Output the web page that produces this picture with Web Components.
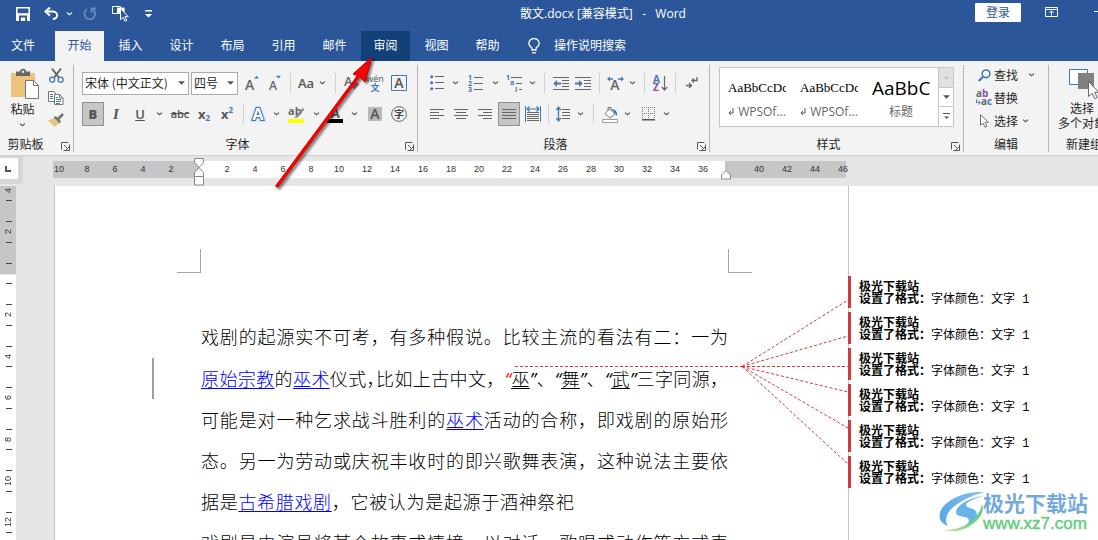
<!DOCTYPE html>
<html lang="zh-CN">
<head>
<meta charset="utf-8">
<title>散文.docx - Word</title>
<style>
  html, body { margin: 0; height: 100%; }
  body { font: 12px/16px "Noto Sans CJK SC", "Liberation Sans", sans-serif; color: #262626; overflow: hidden; background: #fff; }
</style>
</head>
<body>
<word-app></word-app>

<script>
const define = (name, html, setup) => {
  const tpl = document.createElement('template');
  tpl.innerHTML = html;
  customElements.define(name, class extends HTMLElement {
    connectedCallback() {
      if (this.shadowRoot) return;
      this.attachShadow({ mode: 'open' }).append(tpl.content.cloneNode(true));
      if (setup) setup(this, this.shadowRoot);
    }
  });
};

const G = '#666', B = '#3f78b5';
const lines = (list, c = G) => list.map(([x, y, w]) => `<rect x="${x}" y="${y}" width="${w}" height="1" fill="${c}"/>`).join('');
const T = 'font-family="Open Sans, sans-serif"';
const icons = {
  save: [14, 14, `<path fill="#fff" fill-rule="evenodd" d="M0 0h14v14H0zM1.6 1.4v4.8h10.8V1.4zM3 8.6V14h1.8v-3.6h4.4V14H11V8.6z"/><path fill="#fff" d="M5.4 11.2h1.8V14H5.4z"/>`],
  undo: [15, 13, `<path d="M1.6 4.6h7.2a4.2 3.6 0 0 1 0 7.4" fill="none" stroke="#fff" stroke-width="2"/><path d="M6 .4 1.5 4.6 6 8.8" fill="none" stroke="#fff" stroke-width="2"/>`],
  redo: [14, 14, `<path d="M9.6 2.2A5.4 5.4 0 1 1 4 2.2" fill="none" stroke="#6b8bbd" stroke-width="1.8"/><path d="M8.6 6V1.4h4.6" fill="none" stroke="#6b8bbd" stroke-width="1.8"/>`],
  pick: [17, 17, `<path d="M.5 1.5h8v7h-8z" fill="none" stroke="#fff"/><path d="M5 2.6h7.6V9H5z" fill="#fff"/><path d="M8.5 3.5v11.2l2.7-2.4 1.8 4 1.8-.9-1.9-3.7h3.4z" fill="#2b579a" stroke="#fff"/>`],
  custom: [7, 8, `<path d="M0 0h7v1.4H0zM0 4h7L3.5 7.5z" fill="#fff"/>`],
  bulb: [12, 16, `<path d="M4 12v-2C2.500 8.600.800 7.600.800 5.400a5.200 4.900 0 0 1 10.400 0C11.200 7.600 9.500 8.600 8 10v2zM4 14.800h4" fill="none" stroke="#fff" stroke-width="1.300"/>`],
  ribbonopt: [13, 10, `<path d="M.5.5h12v9H.5zM.5 2.500h12M6.500 8.500V4.200M4.300 6l2.200-2.200L8.700 6" fill="none" stroke="#fff"/>`],
  min: [10, 2, `<path d="M0 0h10v1H0z" fill="#fff"/>`],
  chev: [7, 4, `<path d="M1 .6 3.500 2.800 6 .6" fill="none" stroke="#555" stroke-width="1.200"/>`],
  chevw: [7, 4, `<path d="M1 .6 3.500 2.800 6 .6" fill="none" stroke="#fff" stroke-width="1.200"/>`],
  launch: [9, 9, `<path d="M.5 7.500V.5h7M3 3l4 4" fill="none" stroke="#555"/><path d="M8.500 2.500v6H2.500M4.500 8.500 8.500 4.500" fill="none" stroke="#555"/>`],
  paste: [28, 30, `<path d="M0 4h24v24H0z" fill="#edc47a"/><path d="M5 7V2.600h4a3 2.800 0 0 1 6 0h4V7z" fill="#666"/><circle cx="12" cy="2.800" r="1.200" fill="#f3f3f3"/><path d="M14.500 11.500h8l5 5v13h-13z" fill="#fff" stroke="#777"/><path d="M22.500 11.500v5h5" fill="none" stroke="#777"/>`],
  cut: [15, 15, `<path d="M3 .5l6.800 9M12 .5 5.200 9.500" stroke="#666" stroke-width="2" fill="none"/><circle cx="3.200" cy="11.700" r="2.500" fill="none" stroke="${B}" stroke-width="1.300"/><circle cx="11.600" cy="11.700" r="2.500" fill="none" stroke="${B}" stroke-width="1.300"/>`],
  copy: [16, 14, `<path d="M6 10.500H.5V.5H6L8 3" fill="#fff" stroke="#777"/>${lines([[2,3,3],[2,5,3],[2,7,3]],B)}<path d="M6.500 3.500h5l3.500 3.500v6.500H6.500z" fill="#fff" stroke="#777"/><path d="M11.500 3.500V7H15" fill="none" stroke="#777"/>${lines([[8,6,2],[8,8,5],[8,10,5],[8,12,4]],B)}`],
  brush: [16, 15, `<path d="M0 7.500 5.500 5l5.500 5.500L6.500 14z" fill="#edc47a"/><path d="M5.500 4.600 7.600 3l2 1.600L14 0l2 2-4.400 4.600 1.400 2-1.600 1.900z" fill="#777"/>`],
  grow: [14, 16, `<text x="0" y="15" ${T} font-size="14" font-weight="600" fill="${G}">A</text><path d="M9 3.500 11.500.8 14 3.500z" fill="${B}"/>`],
  shrink: [14, 16, `<text x="1" y="15" ${T} font-size="12" font-weight="600" fill="${G}">A</text><path d="M8 .8h5L10.500 3.500z" fill="${B}"/>`],
  clear: [16, 16, `<text x="0" y="11" ${T} font-size="13" fill="${G}">A</text><path d="M6 11.500 11.500 6l4 3.500-5 5z" fill="#c77b95"/>`],
  boxa: [16, 16, `<path d="M.5.5h15v15H.5z" fill="none" stroke="${B}"/><text x="8" y="13" text-anchor="middle" ${T} font-size="14" font-weight="600" fill="#555">A</text>`],
  glow: [16, 16, `<text x="8" y="14" text-anchor="middle" ${T} font-size="16" font-weight="700" fill="#fff" stroke="${B}" stroke-width="2" paint-order="stroke" style="filter:drop-shadow(0 0 1px #8fb6e0)">A</text>`],
  mark: [17, 17, `<text x="0" y="9" ${T} font-size="11" font-weight="700" fill="${G}">ab</text><path d="M15 1.500 8 9.500 6 12l3.500-.5L16 4z" fill="#888"/><path d="M0 13h16v4H0z" fill="#ff0"/>`],
  fcolor: [17, 17, `<text x="8" y="12" text-anchor="middle" ${T} font-size="14" font-weight="700" fill="${G}">A</text><path d="M0 13h16v4H0z" fill="#000"/>`],
  shade: [14, 14, `<path d="M0 0h14v14H0z" fill="#b9b9b9"/><text x="7" y="12" text-anchor="middle" ${T} font-size="14" font-weight="600" fill="#555">A</text>`],
  circ: [16, 16, `<circle cx="8" cy="8" r="7.400" fill="none" stroke="#666"/><text x="8" y="12" text-anchor="middle" font-family="Noto Sans CJK SC" font-size="10" fill="#444">字</text>`],
  bullets: [14, 16, `<circle cx="1.700" cy="1.700" r="1.500" fill="${B}"/><circle cx="1.700" cy="7.700" r="1.500" fill="${B}"/><circle cx="1.700" cy="13.700" r="1.500" fill="${B}"/>${lines([[5,1,9],[5,7,9],[5,13,9]])}`],
  numbers: [15, 17, `<g ${T} font-size="7" font-weight="700" fill="${B}"><text y="5">1</text><text y="11">2</text><text y="17">3</text></g>${lines([[6,2,9],[6,8,9],[6,14,9]])}`],
  multi: [17, 17, `<g ${T} font-size="7" font-weight="700" fill="${B}"><text y="5">1</text><text x="4" y="10">a</text><text x="9" y="17">i</text></g>${lines([[5,2,11],[10,8,6],[13,14,3]])}`],
  outdent: [16, 13, lines([[0,0,16],[9,3,7],[9,6,7],[9,9,7],[0,12,16]]) + `<path d="M.3 6.500 4 3v2.500h4v2H4V10z" fill="${B}"/>`],
  indent: [16, 13, lines([[0,0,16],[9,3,7],[9,6,7],[9,9,7],[0,12,16]]) + `<path d="M7.700 6.500 4 3v2.500H0v2h4V10z" fill="${B}"/>`],
  asian: [17, 15, `<text x="8" y="14" text-anchor="middle" ${T} font-size="14" font-weight="600" fill="${G}">A</text><path d="M0 3 3 .5v1.700h3v1.600H3v1.700zM17 3 14 .5v1.700h-3v1.600h3v1.700z" fill="${B}"/>`],
  sort: [15, 17, `<text y="8" ${T} font-size="10" font-weight="700" fill="${B}">A</text><text y="16" ${T} font-size="10" font-weight="700" fill="#8a4fa8">Z</text><path d="M11.500 1v14M8.800 12l2.700 3 2.700-3" fill="none" stroke="${G}" stroke-width="1.200"/>`],
  pmark: [12, 12, `<path d="M11 0v3.500H6M8 1.500 6 3.500l2 2M0 8.500h5M3 6l2.500 2.500L3 11" fill="none" stroke="${G}" stroke-width="1.300"/>`],
  al: [14, 11, lines([[0,0,14],[0,3,9],[0,6,14],[0,9,9]])],
  ac: [14, 11, lines([[0,0,14],[2,3,10],[0,6,14],[2,9,10]])],
  ar: [14, 11, lines([[0,0,14],[5,3,9],[0,6,14],[5,9,9]])],
  aj: [14, 11, lines([[0,0,14],[0,3,14],[0,6,14],[0,9,14]])],
  dist: [16, 16, `<path d="M.5 0v16M15.500 0v16" stroke="${B}"/><path d="M4.500.5 2 3l2.500 2.500M11.500.5 14 3l-2.500 2.500M2 3h12" stroke="${B}" fill="none" stroke-width="1.200"/>${lines([[2,6,12],[2,8,12],[2,10,12],[2,12,12],[2,14,12]])}`],
  spacing: [14, 16, `<path d="M2.500 1v14M.3 4l2.200-3 2.200 3M.3 12l2.200 3 2.200-3" stroke="${B}" fill="none" stroke-width="1.300"/>${lines([[6,3,8],[6,6,8],[6,9,8],[6,12,8]])}`],
  bucket: [17, 17, `<path d="M7.500 2.500 13 8l-5 4-5-4.500zM6 5V1.500h3V5" fill="#fff" stroke="#777"/><path d="M10 3c4 .5 5.500 3 5 6.500-2-.5-1-2.500-3-3z" fill="${B}"/><path d="M.5 13.500h15v3H.5z" fill="#fff" stroke="#999"/>`],
  borders: [13, 14, `<path d="M.5 0v12M6.500 0v12M12.500 0v12M0 .5h13M0 6.500h13" stroke="#777" stroke-dasharray="1 1" fill="none"/><path d="M0 12h13v1.500H0z" fill="#555"/>`],
  find: [13, 13, `<circle cx="8" cy="4.800" r="3.800" fill="#fff" stroke="${B}" stroke-width="1.600"/><path d="M5 7.800.8 12" stroke="${B}" stroke-width="2.200"/>`],
  replace: [17, 16, `<g ${T} font-size="10" font-weight="700"><text y="7" fill="${G}">a<tspan fill="#8a4fa8">b</tspan></text><text x="5" y="15" fill="${G}">a<tspan fill="${B}">c</tspan></text></g><path d="M.5 9.500v3h3M2.500 10.500l2 2-2 2" fill="none" stroke="${B}"/>`],
  cursor: [9, 14, `<path d="M.5.8v10.700l2.600-2.400 1.900 4.200 1.900-.9L5 8.400h3.500z" fill="#fff" stroke="#777"/>`],
  objects: [30, 30, `<path d="M.5.5h18v15H.5z" fill="#fff" stroke="${B}"/><path d="M9 4h16v16H9z" fill="#808080"/><path d="M19.500 12.500v15l3.700-3.200 2.600 5.400 2.400-1.200-2.600-5.200h4.200z" fill="#fff" stroke="#666"/>`],
  up: [7, 4, `<path d="M1 3.500h5L3.500 1z" fill="#bbb"/>`],
  down: [7, 4, `<path d="M0 .3h7L3.500 3.800z" fill="#555"/>`],
  more: [7, 7, `<path d="M0 0h7v1H0zM1 3.500h5L3.500 6z" fill="#555"/>`],
  ret: [6, 8, `<path d="M5 0v5H1M3 3 1 5l2 2" fill="none" stroke="#555"/>`],
  tabstop: [6, 6, `<path d="M1 0v5h5" fill="none" stroke="#555" stroke-width="2"/>`],
  hang: [12, 28, `<path d="M1.500.5h9v4L6 9.500 1.500 4.500zM6 9.500l4.500 5v4h-9v-4zM1.500 18.500h9V27h-9z" fill="#fff" stroke="#888"/>`],
  right: [12, 10, `<path d="M6 .5 10.500 5v4h-9V5z" fill="#fff" stroke="#888"/>`]
};

define('rb-icon', `<style>:host{display:inline-flex;flex:none}svg{display:block;overflow:visible}</style>`, (el, root) => {
  const [w, h, body] = icons[el.getAttribute('name')];
  root.innerHTML += `<svg width="${w}" height="${h}" viewBox="0 0 ${w} ${h}" aria-hidden="true">${body}</svg>`;
});

/* Ribbon tool: w = width of its cell in the row */
define('rb-tool', `<style>
  :host{display:flex;flex:none;height:24px}
  button{all:unset;box-sizing:border-box;flex:1;min-width:0;display:flex;align-items:center;justify-content:center;color:#555;font:600 13px/16px "Open Sans","Noto Sans CJK SC",sans-serif}
  :host([on]) button{background:#c6c6c6;border:1px solid #929292}
</style><button type="button"><slot></slot></button>`, (el, root) => {
  const b = root.querySelector('button');
  el.style.width = el.getAttribute('w') + 'px';
  b.setAttribute('aria-label', el.getAttribute('label') || '更多');
  if (el.hasAttribute('icon')) b.insertAdjacentHTML('afterbegin', `<rb-icon name="${el.getAttribute('icon')}"></rb-icon>`);
});

define('rb-sep', `<style>:host{flex:none;display:flex;justify-content:center;height:20px}i{width:1px;background:#d0d0d0}</style><i></i>`,
  el => { el.style.width = el.getAttribute('w') + 'px'; });

define('rb-group', `<style>
  :host{display:flex;flex-direction:column;box-sizing:border-box;border-right:1px solid #b5b5b5;height:87px;flex:none}
  .body{flex:1;min-height:0}
  footer{display:flex;height:16px;align-items:center}
  span{flex:1;text-align:center;white-space:nowrap}
  button{all:unset;width:12px;display:flex;padding-top:4px}
  :host([launcher]) span{padding-right:4px}
  :host(.clip) span{padding-right:10px}
</style><div class="body"><slot></slot></div><footer><span></span></footer>`, (el, root) => {
  root.querySelector('span').textContent = el.getAttribute('label');
  if (el.hasAttribute('launcher')) root.querySelector('footer').insertAdjacentHTML('beforeend', '<button type="button" aria-label="更多设置"><rb-icon name="launch"></rb-icon></button>');
});

define('rb-select', `<style>
  :host{display:grid;align-items:center;flex:none;height:23px}
  select,rb-icon{grid-area:1/1}
  select{appearance:none;box-sizing:border-box;width:100%;height:23px;margin:0;padding:0 0 0 2px;border:1px solid #ababab;border-radius:0;background:#fff;color:#262626;font:inherit}
  rb-icon{justify-self:end;margin-right:4px;pointer-events:none}
</style><select></select><rb-icon name="down"></rb-icon>`, (el, root) => {
  const s = root.querySelector('select');
  s.add(new Option(el.getAttribute('value')));
  s.setAttribute('aria-label', el.getAttribute('label'));
  el.style.width = el.getAttribute('w') + 'px';
});

define('title-bar', `<style>
  :host{display:flex;height:31px;background:#2b579a;color:#fff}
  button{all:unset;display:flex;align-items:center;justify-content:center}
  .qat{display:flex;flex:0 0 223px;padding:0 0 4px 8px}
  .qat button{width:30px}
  .qat .u{width:27px}
  .qat .s{width:8px}
  .qat .r{width:34px}
  .qat .p{width:26px}
  h1{flex:1;margin:0;padding-bottom:4px;align-self:center;text-align:center;font:12px/16px "Open Sans","Noto Sans CJK SC",sans-serif;white-space:pre}
  .win{display:flex;align-items:flex-start}
  .win .login{box-sizing:border-box;width:46px;height:19px;padding-bottom:2px;margin-top:3px;background:#fff;color:#2b579a;border-radius:1px}
  .win .opt{width:61px;height:24px}
  .win .min{width:4px;height:24px;justify-content:flex-start;margin-left:12px;overflow:hidden}
</style>
<div class="qat">
  <button type="button" aria-label="保存"><rb-icon name="save"></rb-icon></button>
  <button type="button" class="u" aria-label="撤消"><rb-icon name="undo"></rb-icon></button>
  <button type="button" class="s" aria-label="撤消列表"><rb-icon name="chevw"></rb-icon></button>
  <button type="button" class="r" aria-label="重复"><rb-icon name="redo"></rb-icon></button>
  <button type="button" class="p" aria-label="选择对象"><rb-icon name="pick"></rb-icon></button>
  <button type="button" aria-label="自定义快速访问工具栏"><rb-icon name="custom"></rb-icon></button>
</div>
<h1>散文.docx [兼容模式]   -   Word</h1>
<div class="win">
  <button type="button" class="login">登录</button>
  <button type="button" class="opt" aria-label="功能区显示选项"><rb-icon name="ribbonopt"></rb-icon></button>
  <button type="button" class="min" aria-label="最小化"><rb-icon name="min"></rb-icon></button>
</div>`);

define('tab-strip', `<style>
  :host{display:flex;gap:2px;height:30px;background:#2b579a;color:#fff;font-size:12px}
  button{all:unset;box-sizing:border-box;width:49px;height:30px;padding-bottom:3px;display:flex;align-items:center;justify-content:center;flex:none}
  .file{width:53px;padding-right:7px}
  .on{background:#f3f3f3;color:#2b579a}
  .hot{background:#124078}
  .tell{width:auto;gap:14px;margin-left:14px}
  .tell rb-icon{margin-top:3px}
</style>
<button type="button" class="file">文件</button><button type="button" class="on">开始</button><button type="button">插入</button><button type="button">设计</button><button type="button">布局</button><button type="button">引用</button><button type="button">邮件</button><button type="button" class="hot">审阅</button><button type="button">视图</button><button type="button">帮助</button>
<button type="button" class="tell"><rb-icon name="bulb"></rb-icon>操作说明搜索</button>`);

define('ribbon-bar', `<style>
  :host{display:flex;box-sizing:border-box;height:95px;padding-top:4px;background:#f3f3f3;border-bottom:1px solid #d2d2d2;overflow:hidden}
  .row{display:flex;align-items:center;height:24px}
  .font .row,.para .row{margin-top:6px}
  .row + .row{margin-top:7px}
  .clip{width:74px}.font{width:344px}.para{width:292px}.style{flex:1 0 254px}.edit{width:85px}.new{width:70px;border-right:0}
  .clipbody{display:grid;grid-template-columns:45px 20px;column-gap:1px}
  button{all:unset;font:inherit}
  .big{display:flex;flex-direction:column;align-items:center;padding-top:4px}
  .clipbody .big rb-icon:first-child{margin:0 0 2px 4px}
  .clipbody .big rb-icon:last-child{margin-top:6px}
  .small{display:flex;flex-direction:column;align-items:center;gap:8px;padding-top:3px}
  .small button{display:flex}
  .font .row{padding-left:8px}.para .row{padding-left:6px}
  .strike{text-decoration:line-through;font-weight:600;font-size:11px}
  .ital{font:italic 700 15px/16px "Liberation Serif",serif}
  sub,sup{font-size:8px;line-height:8px;color:#3f78b5;align-self:flex-end}
  sup{align-self:flex-start}
  .sub{display:flex;font-weight:700}
  .wen{display:flex;flex-direction:column;align-items:center;font:400 9px/9px "Open Sans",sans-serif}
  .wen b{font:700 9px/9px "Noto Sans CJK SC",sans-serif;color:#3f78b5}
  .gallery{display:flex;box-sizing:border-box;height:60px;margin:2px 9px 0;border:1px solid #c6c6c6;background:#fff}
  .cells{flex:1;display:flex;gap:14px;padding-left:8px;overflow:hidden}
  .cells button{width:58px;overflow:hidden;white-space:nowrap;display:flex;flex-direction:column}
  .s{font:13px/40px "Liberation Serif",serif;color:#000;height:36px}
  .s.h{font:19px/40px "Open Sans",sans-serif}
  .l{color:#666;display:flex;align-items:center;justify-content:center;gap:4px;font:12px/16px "Open Sans","Noto Sans CJK SC",sans-serif}
  .nav{display:flex;flex-direction:column;width:14px;border-left:1px solid #c6c6c6}
  .nav button{flex:1;display:flex;align-items:center;justify-content:center}
  .nav button:first-child{background:#e1e1e1}
  .nav button + button{border-top:1px solid #c6c6c6}
  .edit button{display:flex;align-items:center;height:20px;padding-bottom:3px;width:74px;padding-left:10px}
  .edit button rb-icon:first-child{width:20px;justify-content:center}
  .edit .ch{margin-left:10px}
  .edit .near{margin-left:4px}
  .new .big{width:66px;line-height:15px;padding-top:4px}
  .new .big rb-icon{margin:0 0 1px 4px}
</style>
<rb-group class="clip" label="剪贴板" launcher><div class="clipbody">
  <button type="button" class="big"><rb-icon name="paste"></rb-icon>粘贴<rb-icon name="chev"></rb-icon></button>
  <div class="small"><button type="button" aria-label="剪切"><rb-icon name="cut"></rb-icon></button><button type="button" aria-label="复制"><rb-icon name="copy"></rb-icon></button><button type="button" aria-label="格式刷"><rb-icon name="brush"></rb-icon></button></div>
</div></rb-group>
<rb-group class="font" label="字体" launcher>
  <div class="row">
    <rb-select w="107" label="字体" value="宋体 (中文正文)"></rb-select><rb-select w="47" label="字号" value="四号" style="margin-left:2px"></rb-select>
    <rb-tool w="28" icon="grow" label="增大字号"></rb-tool><rb-tool w="18" icon="shrink" label="减小字号"></rb-tool><rb-sep w="12"></rb-sep>
    <rb-tool w="20" label="更改大小写">Aa</rb-tool><rb-tool w="12" icon="chev"></rb-tool><rb-sep w="14"></rb-sep>
    <rb-tool w="20" icon="clear" label="清除格式"></rb-tool><rb-tool w="26" label="拼音指南"><span class="wen">wén<b>文</b></span></rb-tool><rb-tool w="22" icon="boxa" label="字符边框"></rb-tool>
  </div>
  <div class="row">
    <rb-tool w="22" on label="加粗"><b>B</b></rb-tool><rb-tool w="24" label="倾斜"><span class="ital">I</span></rb-tool><rb-tool w="24" label="下划线"><u>U</u></rb-tool><rb-tool w="14" icon="chev"></rb-tool>
    <rb-tool w="28" label="删除线"><span class="strike">abc</span></rb-tool><rb-tool w="20" label="下标"><span class="sub">x<sub>2</sub></span></rb-tool><rb-tool w="26" label="上标"><span class="sub">x<sup>2</sup></span></rb-tool><rb-sep w="6"></rb-sep>
    <rb-tool w="24" icon="glow" label="文本效果"></rb-tool><rb-tool w="12" icon="chev"></rb-tool><rb-tool w="28" icon="mark" label="突出显示"></rb-tool><rb-tool w="12" icon="chev"></rb-tool>
    <rb-tool w="26" icon="fcolor" label="字体颜色"></rb-tool><rb-tool w="12" icon="chev"></rb-tool><rb-tool w="30" icon="shade" label="字符底纹"></rb-tool><rb-tool w="18" icon="circ" label="带圈字符"></rb-tool>
  </div>
</rb-group>
<rb-group class="para" label="段落" launcher>
  <div class="row">
    <rb-tool w="26" icon="bullets" label="项目符号"></rb-tool><rb-tool w="10" icon="chev"></rb-tool><rb-tool w="30" icon="numbers" label="编号"></rb-tool><rb-tool w="10" icon="chev"></rb-tool><rb-tool w="28" icon="multi" label="多级列表"></rb-tool><rb-tool w="8" icon="chev"></rb-tool><rb-sep w="16"></rb-sep>
    <rb-tool w="18" icon="outdent" label="减少缩进量"></rb-tool><rb-tool w="26" icon="indent" label="增加缩进量"></rb-tool><rb-sep w="6"></rb-sep><rb-tool w="26" icon="asian" label="中文版式"></rb-tool><rb-tool w="8" icon="chev"></rb-tool><rb-sep w="16"></rb-sep>
    <rb-tool w="16" icon="sort" label="排序"></rb-tool><rb-sep w="14"></rb-sep><rb-tool w="20" icon="pmark" label="显示编辑标记"></rb-tool>
  </div>
  <div class="row">
    <rb-tool w="26" icon="al" label="左对齐"></rb-tool><rb-tool w="22" icon="ac" label="居中"></rb-tool><rb-tool w="26" icon="ar" label="右对齐"></rb-tool><rb-tool w="22" on icon="aj" label="两端对齐"></rb-tool><rb-tool w="26" icon="dist" label="分散对齐"></rb-tool><rb-sep w="4"></rb-sep>
    <rb-tool w="26" icon="spacing" label="行和段落间距"></rb-tool><rb-tool w="8" icon="chev"></rb-tool><rb-sep w="18"></rb-sep><rb-tool w="16" icon="bucket" label="底纹"></rb-tool><rb-tool w="18" icon="chev"></rb-tool><rb-tool w="24" icon="borders" label="边框"></rb-tool><rb-tool w="12" icon="chev"></rb-tool>
  </div>
</rb-group>
<rb-group class="style" label="样式" launcher><div class="gallery">
  <div class="cells">
    <button type="button"><span class="s">AaBbCcDd</span><span class="l"><rb-icon name="ret"></rb-icon>WPSOf...</span></button>
    <button type="button"><span class="s">AaBbCcDd</span><span class="l"><rb-icon name="ret"></rb-icon>WPSOf...</span></button>
    <button type="button"><span class="s h">AaBbC</span><span class="l">标题</span></button>
  </div>
  <div class="nav"><button type="button" aria-label="上一行"><rb-icon name="up"></rb-icon></button><button type="button" aria-label="下一行"><rb-icon name="down"></rb-icon></button><button type="button" aria-label="其他"><rb-icon name="more"></rb-icon></button></div>
</div></rb-group>
<rb-group class="edit" label="编辑">
  <button type="button"><rb-icon name="find"></rb-icon>查找<rb-icon name="chev" class="ch"></rb-icon></button>
  <button type="button"><rb-icon name="replace"></rb-icon>替换</button>
  <button type="button"><rb-icon name="cursor"></rb-icon>选择<rb-icon name="chev" class="near"></rb-icon></button>
</rb-group>
<rb-group class="new" label="新建组"><button type="button" class="big"><rb-icon name="objects"></rb-icon><span>选择</span><span>多个对象</span></button></rb-group>`);

define('h-ruler', `<style>
  :host{display:flex;height:30px;background:#e6e6e6}
  .corner{all:unset;box-sizing:border-box;width:23px;height:28px;border:solid #d6d6d6;border-width:2px 5px 5px 0;background:#fdfdfd;display:flex;align-items:center;justify-content:center;padding-right:2px}
  .scale{position:relative;margin:5px 0 0 22px}
  ol{display:flex;margin:0;padding:0;list-style:none;font:9px/17px "Liberation Sans",sans-serif;color:#333;
    background:linear-gradient(to right,transparent 8px,#c6c6c6 8px 154px,#fff 154px 680px,#c6c6c6 680px 801px,transparent 801px)}
  li{width:28px;height:17px;text-align:center}
  rb-icon{position:absolute}
  .l{left:148px;top:-3px}
  .r{left:675px;top:9px}
</style><button type="button" class="corner" aria-label="制表符"><rb-icon name="tabstop" style="position:static"></rb-icon></button>
<div class="scale"><ol></ol><rb-icon class="l" name="hang"></rb-icon><rb-icon class="r" name="right"></rb-icon></div>`, (el, root) => {
  const ol = root.querySelector('ol');
  for (let n = -10; n <= 46; n += 2) {
    const li = document.createElement('li');
    li.textContent = n === 0 || n === 38 ? '' : Math.abs(n);
    ol.append(li);
  }
});

define('v-ruler', `<style>
  :host{display:block;width:16px;flex:none;overflow:hidden;background:linear-gradient(#c6c6c6 88px,#e6e6e6 88px 89px,#fff 89px)}
  ol{margin:-16px 0 0;padding:0;list-style:none;font:9px/16px "Liberation Sans",sans-serif;color:#333}
  li{box-sizing:border-box;height:41px;padding:10px 0;display:flex;flex-direction:column;align-items:center;justify-content:space-between}
  li:nth-child(even){height:42px}
  li::before,li::after{content:"";width:6px;height:1px;margin-left:2px;background:#444}
  span{writing-mode:vertical-rl;transform:rotate(180deg);width:16px}
</style><ol></ol>`, (el, root) => {
  root.querySelector('ol').innerHTML = ['4','2','','2','4','6','8','10','12'].map(n => `<li><span>${n}</span></li>`).join('');
});

define('doc-page', `<style>
  :host{display:grid;box-sizing:border-box;flex:none;width:795px;grid-template-columns:146px 527px 1fr;grid-template-rows:63px 24px 45px auto;border:solid #c6c6c6;border-width:0 1px;background:#fff}
  .mark{grid-row:2;width:23px;border:solid #a6a6a6;border-width:0 1px 1px 0}
  .tl{grid-column:1;justify-self:end}
  .tr{grid-column:3;border-width:0 0 1px 1px}
  article{grid-area:4/2;font:300 18px/41px "Liberation Serif","Noto Sans CJK SC",serif;color:#000}
  p{margin:0;white-space:nowrap;text-align:justify;text-align-last:justify;position:relative}
  .short{padding-right:154px}
  .changed::before{content:"";position:absolute;left:-49px;top:-1px;width:2px;height:41px;background:#a0a0a0}
  a{color:#00f}
  a,u{text-decoration-thickness:1px;text-underline-offset:2px}
  .half{font-feature-settings:"halt"}
  .q{font-family:"Open Sans",sans-serif;font-style:italic;font-weight:400}
  .red{color:#f00}
</style>
<div class="mark tl"></div><div class="mark tr"></div>
<article>
  <p>戏剧的起源实不可考，有多种假说。比较主流的看法有二：一为</p>
  <p class="changed"><a href="#a">原始宗教</a>的<a href="#b">巫术</a>仪式<span class="half">，</span>比如上古中文，<span class="q red">“</span><u>巫</u><span class="q">”</span>、<span class="q">“</span><u>舞</u><span class="q">”</span>、<span class="q">“</span><u>武</u><span class="q">”</span>三字同源，</p>
  <p>可能是对一种乞求战斗胜利的<a href="#b">巫术</a>活动的合称，即戏剧的原始形</p>
  <p>态。另一为劳动或庆祝丰收时的即兴歌舞表演，这种说法主要依</p>
  <p class="short">据是<a href="#c">古希腊戏剧</a>，它被认为是起源于酒神祭祀</p>
  <p>戏剧是由演员将某个故事或情境，以对话、歌唱或动作等方式表</p>
</article>`);

define('review-note', `<style>
  :host{display:block;box-sizing:border-box;height:32px;padding:6px 0 0 8px;border-left:3px solid #cd3b41;color:#000;font:12px/12px "Liberation Mono","Noto Sans CJK SC",monospace;white-space:nowrap}
  b{display:block;font-weight:700}
  strong{font-weight:700}
</style><b>极光下载站</b><strong>设置了格式：</strong>字体颜色：文字 1`);

define('review-pane', `<style>
  :host{display:flex;flex-direction:column;gap:4px;flex:1;margin-left:-1px;padding-top:90px;z-index:1}
</style>${'<review-note></review-note>'.repeat(6)}`);

define('site-mark', `<style>
  :host{display:flex;align-items:center;gap:0;white-space:nowrap}
  .t{display:flex;flex-direction:column;margin-left:-4px}
  strong{font:700 21px/24px "Noto Sans CJK SC",sans-serif;color:#74a9de}
  span{font:17px/20px "Liberation Sans",sans-serif;color:#68cc84;-webkit-text-stroke:0.5px #68cc84}
</style>
<svg width="48" height="42" viewBox="0 0 48 42" aria-hidden="true"><defs><linearGradient id="b" x1="0" x2="1"><stop stop-color="#5aa7e6"/><stop offset="1" stop-color="#8cc4ee"/></linearGradient><linearGradient id="g" x1="0" x2="1"><stop stop-color="#d2e58c"/><stop offset="1" stop-color="#5ccb7c"/></linearGradient></defs>
<path d="M45 1C26 0 8 8 2 19c-4 9 1 14 7 16-4-6-2-14 8-21C27 7 36 4 45 1z" fill="url(#b)"/>
<path d="M44 5C30 7 16 15 17 22c1 5 12 2 13 7 0 4-5 7-14 9 14-2 22-7 22-14 0-8-11-6-11-10 0-3 7-6 17-9z" fill="#66b2ea"/>
<path d="M43 13c4 9-7 22-21 26-7 2-14 1-18 0 13 0 22-3 29-9 5-5 9-10 10-17z" fill="url(#g)"/></svg>
<div class="t"><strong>极光下载站</strong><span>www.xz7.com</span></div>`);

define('word-app', `<style>
  :host{display:flex;flex-direction:column;height:100vh;position:relative;overflow:hidden}
  main{flex:1;min-height:0;display:flex;background:#fff;overflow:hidden}
  .gutter{width:38px;flex:none;background:#e6e6e6}
  svg{position:absolute;left:0;top:0;z-index:2;pointer-events:none}
  site-mark{position:absolute;right:10px;bottom:6px;z-index:2}
</style>
<title-bar></title-bar><tab-strip></tab-strip><ribbon-bar></ribbon-bar><h-ruler></h-ruler>
<main><v-ruler></v-ruler><div class="gutter"></div><doc-page></doc-page><review-pane></review-pane></main>
<svg width="860" height="500" viewBox="0 0 860 500" aria-hidden="true">
  <g fill="none" stroke="#d8383e" stroke-dasharray="3 2"><path d="M515 366.500h227M742 366.500 848 300M742 366.500 848 336M742 366.500h106M742 366.500 848 392M742 366.500 848 428M742 366.500 848 464"/></g>
  <g style="filter:drop-shadow(2px 2px 1px rgba(0,0,0,.5))"><path d="M276.500 187 361 73" stroke="#b00000" stroke-width="3.500"/><path d="M372 57 353 74l6 2 6 6z" fill="#f00" stroke="#b00000"/><path d="M276.500 187 362 72" stroke="#f00" stroke-width="2.500"/></g>
</svg>
<site-mark></site-mark>`);
</script>
</body>
</html>
